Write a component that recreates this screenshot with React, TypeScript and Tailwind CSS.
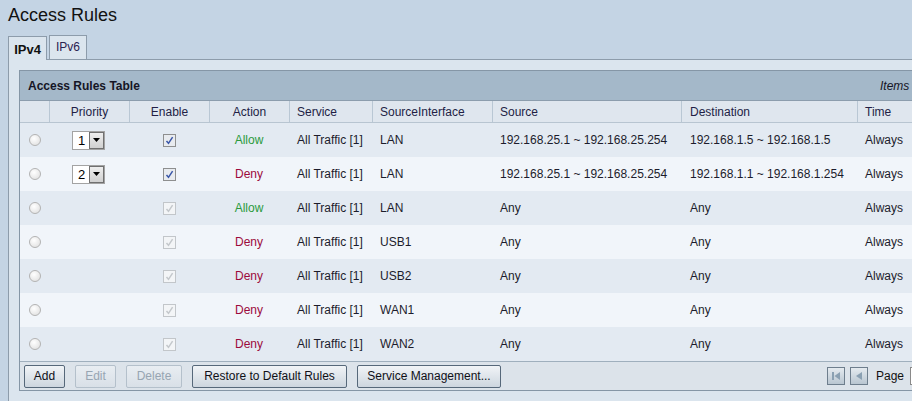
import React from "react";

const font = "font-['Liberation_Sans',Arial,sans-serif]";

type Row = {
  prio?: number;
  action: "Allow" | "Deny";
  iface: string;
  src: string;
  dst: string;
  enabled: boolean;
};

const rows: Row[] = [
  { prio: 1, action: "Allow", iface: "LAN", src: "192.168.25.1 ~ 192.168.25.254", dst: "192.168.1.5 ~ 192.168.1.5", enabled: true },
  { prio: 2, action: "Deny", iface: "LAN", src: "192.168.25.1 ~ 192.168.25.254", dst: "192.168.1.1 ~ 192.168.1.254", enabled: true },
  { action: "Allow", iface: "LAN", src: "Any", dst: "Any", enabled: false },
  { action: "Deny", iface: "USB1", src: "Any", dst: "Any", enabled: false },
  { action: "Deny", iface: "USB2", src: "Any", dst: "Any", enabled: false },
  { action: "Deny", iface: "WAN1", src: "Any", dst: "Any", enabled: false },
  { action: "Deny", iface: "WAN2", src: "Any", dst: "Any", enabled: false },
];

const cols = "grid grid-cols-[29px_80px_80px_80px_83px_120px_189px_176px_1fr]";

function Radio() {
  return (
    <span className="block w-[12px] h-[12px] rounded-full border border-[#b3b3b3] bg-[radial-gradient(circle_at_40%_35%,#ffffff,#dcdcdc)]" />
  );
}

function Check({ enabled }: { enabled: boolean }) {
  return (
    <span
      className={
        "flex items-center justify-center w-[13px] h-[13px] border " +
        (enabled ? "border-[#8e8f8f] bg-[#e8ebef]" : "border-[#c2c6ca] bg-[#f3f5f7]")
      }
    >
      <svg width="9" height="9" viewBox="0 0 9 9">
        <path
          d="M1.5 5 L3.5 7.3 L7.6 1.2"
          fill="none"
          stroke={enabled ? "#3a57a8" : "#c4c8cc"}
          strokeWidth="1.5"
        />
      </svg>
    </span>
  );
}

function Select({ v }: { v: number }) {
  return (
    <div className="flex h-[19px] w-[33px] border border-[#a3a3a3] bg-white">
      <div className="w-[16px] flex items-center justify-center text-[13px] text-black leading-none pl-[1px]">{v}</div>
      <div className="flex-1 flex items-center justify-center border border-[#707070] bg-[linear-gradient(#eeeeee,#d0d0d0)]">
        <svg width="7" height="4" viewBox="0 0 7 4">
          <path d="M0 0 L7 0 L3.5 4 Z" fill="#000" />
        </svg>
      </div>
    </div>
  );
}

function Btn({ w, children, disabled }: { w: string; children: React.ReactNode; disabled?: boolean }) {
  return (
    <div
      className={
        "h-[23px] flex items-center justify-center rounded-[2px] border text-[12px] " +
        w +
        " " +
        (disabled
          ? "border-[#b4c0cb] text-[#97a5b2] bg-[linear-gradient(#e8edf2,#d9e0e7)]"
          : "border-[#56687a] text-[#101018] bg-[linear-gradient(#f1f4f7,#cdd6df)]")
      }
    >
      {children}
    </div>
  );
}

function PageIcon({ first }: { first?: boolean }) {
  return (
    <div className="w-[18px] h-[18px] border border-[#6e7e8d] bg-[linear-gradient(#e4eaef,#b9c6d1)] flex items-center justify-center">
      <svg width="12" height="12" viewBox="0 0 12 12">
        {first && <rect x="2" y="2" width="2" height="8" fill="#8aa0b2" />}
        <path d={first ? "M10 2 L10 10 L4.5 6 Z" : "M9 2 L9 10 L3 6 Z"} fill="#8aa0b2" />
      </svg>
    </div>
  );
}

export default function App() {
  return (
    <div className={"w-[912px] h-[401px] overflow-hidden bg-[#c4d4e4] " + font}>
      <div className="h-[36px] pl-[8px] pt-[5px] text-[18px] leading-[21px] text-[#111]">Access Rules</div>
      <div className="flex items-end pl-[8px] h-[23px] gap-[2px]">
        <div className="relative z-10 w-[39px] border border-b-0 border-[#8d9cab] bg-[#dbe5ee] flex items-center justify-center pt-[2px] text-[13px] font-bold text-[#111] mb-[-1px] h-[24px]">
          IPv4
        </div>
        <div className="h-[24px] w-[38px] border border-b-0 border-[#8d9cab] bg-[#dbe5ee] flex items-center justify-center pb-[2px] text-[12px] text-[#2a2250]">
          IPv6
        </div>
      </div>
      <div className="ml-[8px] w-[1000px] h-[400px] border border-[#8d9cab] bg-[#dbe5ee] pt-[10px] pl-[10px]">
        <div className="w-[1000px] border border-[#8596a6]">
          <div className="h-[30px] bg-[#a4b8c9] border-b border-[#8c9dad] flex items-center">
            <div className="w-[860px] pl-[8px] text-[12px] font-bold text-[#151525]">Access Rules Table</div>
            <div className="text-[12px] italic text-[#151525]">Items</div>
          </div>
          <div className={cols + " h-[22px] bg-[#dfe6ee] border-b border-[#b8c5d1] text-[12px] text-[#221e45]"}>
            <div />
            <div className="border-l border-[#b9c7d4] flex items-center justify-center">Priority</div>
            <div className="border-l border-[#b9c7d4] flex items-center justify-center">Enable</div>
            <div className="border-l border-[#b9c7d4] flex items-center justify-center">Action</div>
            <div className="border-l border-[#b9c7d4] flex items-center pl-[7px]">Service</div>
            <div className="border-l border-[#b9c7d4] flex items-center pl-[7px]">SourceInterface</div>
            <div className="border-l border-[#b9c7d4] flex items-center pl-[7px]">Source</div>
            <div className="border-l border-[#b9c7d4] flex items-center pl-[8px]">Destination</div>
            <div className="border-l border-[#b9c7d4] flex items-center pl-[7px]">Time</div>
          </div>
          {rows.map((r, i) => (
            <div
              key={i}
              className={cols + " h-[34px] text-[12px] text-[#1c1c2c] " + (i % 2 === 0 ? "bg-[#e3eaf2]" : "bg-[#f1f5fa]")}
            >
              <div className="flex items-center pl-[9px]">
                <Radio />
              </div>
              <div className="flex items-center pl-[23px]">{r.prio !== undefined && <Select v={r.prio} />}</div>
              <div className="flex items-center justify-center">
                <Check enabled={r.enabled} />
              </div>
              <div className={"flex items-center justify-center " + (r.action === "Allow" ? "text-[#2a9a3c]" : "text-[#9c0a3c]")}>
                {r.action}
              </div>
              <div className="flex items-center pl-[8px] whitespace-nowrap">All Traffic [1]</div>
              <div className="flex items-center pl-[8px]">{r.iface}</div>
              <div className="flex items-center pl-[8px] whitespace-nowrap">{r.src}</div>
              <div className="flex items-center pl-[9px] whitespace-nowrap">{r.dst}</div>
              <div className="flex items-center pl-[8px]">Always</div>
            </div>
          ))}
          <div className="h-[29px] bg-[#dce3ea] border-t border-[#9fafbd] flex items-center pl-[4px] gap-[10px]">
            <Btn w="w-[41px]">Add</Btn>
            <Btn w="w-[41px]" disabled>Edit</Btn>
            <Btn w="w-[56px]" disabled>Delete</Btn>
            <Btn w="w-[155px]">Restore to Default Rules</Btn>
            <Btn w="w-[144px]">Service Management...</Btn>
            <div className="ml-[316px] flex items-center gap-[5px]">
              <PageIcon first />
              <PageIcon />
              <span className="ml-[3px] text-[12px] text-[#111]">Page</span>
              <div className="ml-[1px] w-[30px] h-[18px] border border-[#8a8a8a] bg-white" />
            </div>
          </div>
        </div>
      </div>
    </div>
  );
}
